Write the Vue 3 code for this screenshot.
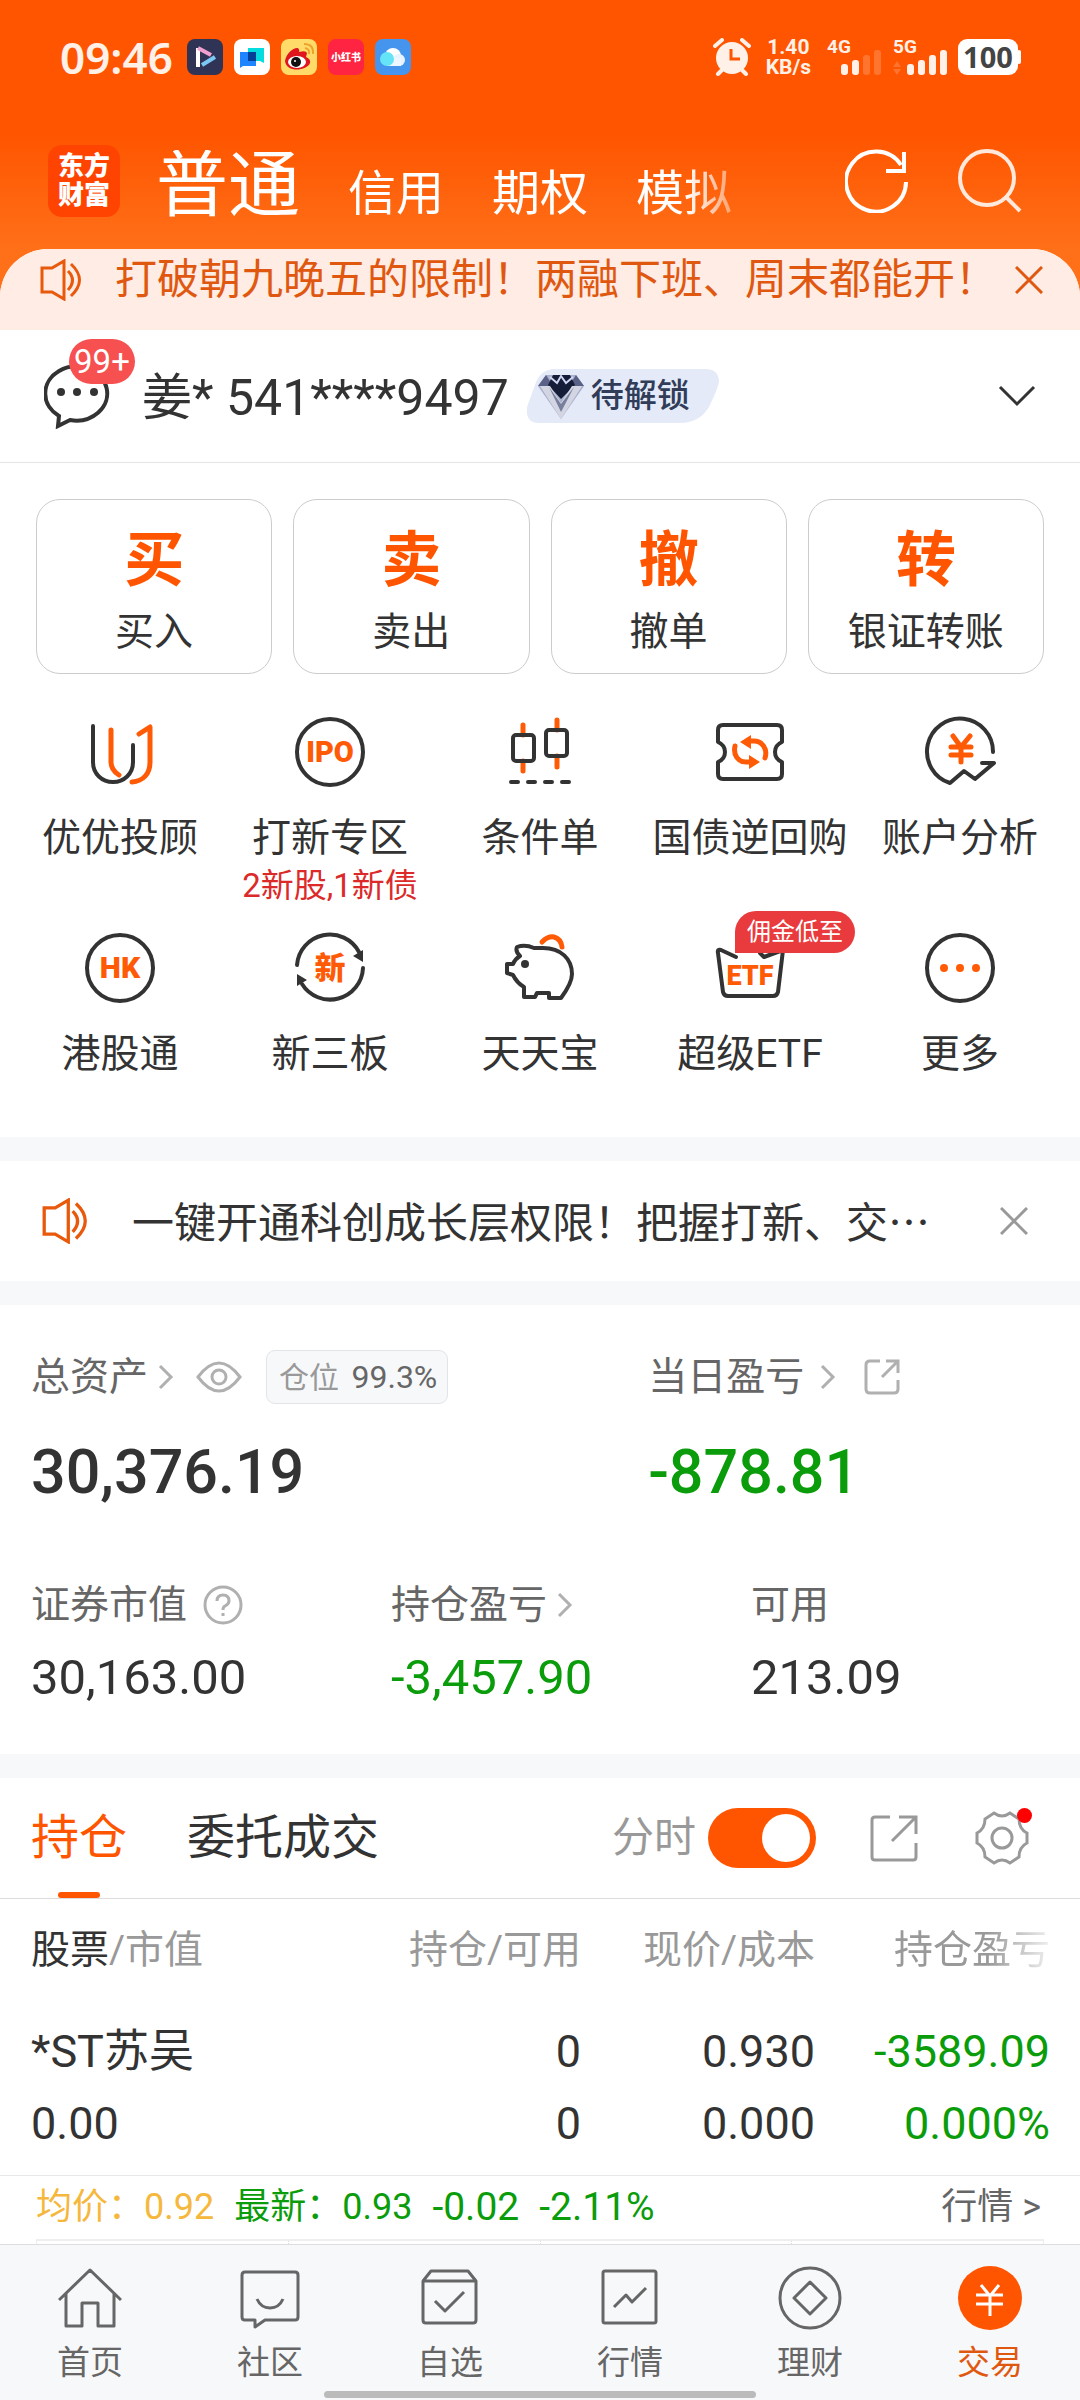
<script setup>
import { ref } from 'vue'

const accountTabs = ['普通', '信用', '期权', '模拟']

const mainActions = [
  { glyph: '买', label: '买入' },
  { glyph: '卖', label: '卖出' },
  { glyph: '撤', label: '撤单' },
  { glyph: '转', label: '银证转账' }
]

const D = 'fill="none" stroke="#333" stroke-width="4" stroke-linecap="round" stroke-linejoin="round"'
const O = 'fill="none" stroke="#ff5a05" stroke-width="5" stroke-linecap="round" stroke-linejoin="round"'
const T = 'fill="#ff5a05" text-anchor="middle" font-weight="900" font-family="Roboto, Noto Sans CJK SC, sans-serif"'

const services = [
  {
    label: '优优投顾',
    icon: `<path ${D} d="M8 9V45C8 57 17 65 28 65S48 57 48 45V28"/><path ${O} d="M26 13V45Q26 53 34 58M54 17L65 10V45C65 57 58 64 47 65"/>`
  },
  {
    label: '打新专区',
    note: '2新股,1新债',
    icon: `<circle ${D} cx="35" cy="35" r="33"/><text ${T} x="35" y="45" font-size="29">IPO</text>`
  },
  {
    label: '条件单',
    icon: `<path ${O} d="M18 8V18M18 44V54M52 3V13M52 39V50"/><rect ${D} x="8" y="18" width="21" height="26" rx="3"/><rect ${D} x="41" y="13" width="21" height="26" rx="3"/><path ${D} d="M6 65H13M23 65H30M40 65H47M57 65H64"/>`
  },
  {
    label: '国债逆回购',
    icon: `<path ${D} d="M8 8H62Q67 8 67 13V25Q60 28 60 35T67 45V57Q67 62 62 62H8Q3 62 3 57V45Q10 42 10 35T3 25V13Q3 8 8 8Z"/><path ${O} d="M20 29C18 38 23 45 31 45H36M50 41C53 32 47 24 39 24H34"/><path fill="#ff5a05" d="M25 25L36 18V32ZM45 45L34 38V52Z"/>`
  },
  {
    label: '账户分析',
    icon: `<path ${D} stroke-linejoin="miter" d="M68 35A33 33 0 1 0 25 66L39 54L50 62L69 46H57"/><path ${O} d="M28 19L36 30L45 19M36 30V45M26 30H46M26 38H46"/>`
  },
  {
    label: '港股通',
    icon: `<circle ${D} cx="35" cy="35" r="33"/><text ${T} x="35" y="45" font-size="30">HK</text>`
  },
  {
    label: '新三板',
    icon: `<path ${D} d="M2 32A33 33 0 0 1 64 19M68 35A33 33 0 0 1 7 51"/><path fill="#333" d="M68 17V29L58 23ZM2 41V53L12 47Z"/><text ${T} x="35" y="46" font-size="31">新</text>`
  },
  {
    label: '天天宝',
    icon: `<path ${D} d="M12 14Q20 11 29 15H38C56 15 67 26 67 41Q67 50 56 65H44V60H32L30 64H19V54Q12 50 8 42L2 40V31H8Q10 26 15 23Q10 18 12 14Z"/><path ${O} d="M37 9Q43 3 49 4Q56 6 57 14"/><circle cx="20" cy="31" r="4" fill="#333"/>`
  },
  {
    label: '超级ETF',
    tag: '佣金低至',
    icon: `<path ${D} d="M21 24L6 17Q2 16 3 20L8 59Q9 63 13 63H58Q62 63 63 59L68 17L49 24L45 20"/><text ${T} x="35" y="52" font-size="27">ETF</text>`
  },
  {
    label: '更多',
    icon: `<circle ${D} cx="35" cy="35" r="33"/><g fill="#ff5a05"><circle cx="19" cy="35" r="4"/><circle cx="35" cy="35" r="4"/><circle cx="51" cy="35" r="4"/></g>`
  }
]

const holdings = [
  { name: '*ST苏吴', value: '0.00', held: '0', available: '0', price: '0.930', cost: '0.000', profit: '-3589.09', rate: '0.000%' }
]

const navItems = [
  { label: '首页', icon: '<path d="M1 34L32 4L63 34M8 28V60H24V37H40V60H56V28"/>' },
  { label: '社区', icon: '<path d="M7 6H57Q60 6 60 9V51Q60 54 57 54H27L17 61V54H7Q4 54 4 51V9Q4 6 7 6Z"/><path d="M19 33Q23 42 32 42T45 33"/>' },
  { label: '自选', icon: '<path d="M5 15L13 5H50L58 15V54Q58 57 55 57H8Q5 57 5 54V15H58M17 35L27 45L46 26"/>' },
  { label: '行情', icon: '<rect x="5" y="5" width="53" height="52" rx="2"/><path d="M16 41L28 29L34 36L48 22"/>' },
  { label: '理财', icon: '<circle cx="32" cy="32" r="30"/><path d="M32 16L48 32L32 48L16 32Z"/>' },
  { label: '交易', active: true, icon: '<circle cx="32" cy="32" r="32" fill="#ff5500" stroke="none"/><path stroke="#fff" d="M23 19L32 30L41 19M18 29H45M18 38H45M32 29V50"/>' }
]

const minuteChart = ref(true)
</script>

<template>
  <div class="page">
    <header class="top">
      <div class="status">
        <span class="clock">09:46</span>
        <div class="apps">
          <svg viewBox="0 0 36 36"><rect width="36" height="36" rx="8" fill="#2f3355" /><path d="M11 9V28" stroke="#fff" stroke-width="4" /><path d="M11 9L24 16" stroke="#f0a0d0" stroke-width="4" /><path d="M15 26L28 18" stroke="#7cc8f4" stroke-width="4" /></svg>
          <svg viewBox="0 0 36 36"><rect width="36" height="36" rx="8" fill="#fff" /><path d="M14 9H30V24L26 22H14Z" fill="#04dce0" /><path d="M6 13H22V27H9L6 29Z" fill="#1f84ff" /><path d="M14 13H22V22H14Z" fill="#063f96" /></svg>
          <svg viewBox="0 0 36 36"><rect width="36" height="36" rx="8" fill="#ffdc6a" /><path d="M4 22C5 14 13 8 17 9Q19 11 18 13Q25 11 26 14L25 18Q30 20 29 24C26 32 5 34 4 22Z" fill="#e0161f" /><ellipse cx="16" cy="23" rx="9" ry="6" fill="#fff" /><circle cx="15" cy="23" r="5" fill="#111" /><circle cx="14" cy="22" r="1" fill="#fff" /><path d="M24 9Q29 10 28 15M23 5Q33 5 32 15" fill="none" stroke="#eea32d" stroke-width="2" /></svg>
          <svg viewBox="0 0 36 36"><rect width="36" height="36" rx="8" fill="#ff2442" /><text x="18" y="22" text-anchor="middle" font-size="10" font-weight="900" fill="#fff">小红书</text></svg>
          <svg viewBox="0 0 36 36"><rect width="36" height="36" rx="8" fill="#4595ee" /><circle cx="18" cy="17" r="8" fill="#fff" /><circle cx="24" cy="21" r="6" fill="#e8f3ff" /><rect x="12" y="19" width="14" height="8" fill="#eef6ff" /><circle cx="12" cy="20" r="7" fill="#64e4f6" /></svg>
        </div>
        <div class="signals">
          <svg class="alarm" viewBox="0 0 38 38"><circle cx="19" cy="20" r="16" fill="#fff0e8" /><path d="M2 8L9 2M36 8L29 2M5 36L9 32M33 36L29 32" stroke="#fff0e8" stroke-width="4" stroke-linecap="round" /><path d="M18 11V21H27" fill="none" stroke="#ff5500" stroke-width="3" /></svg>
          <div class="speed"><span>1.40</span><span>KB/s</span></div>
          <svg class="bars" viewBox="0 0 56 38"><text x="1" y="15" font-size="19" font-weight="700" fill="#fff0e8">4G</text><g fill="#fff0e8"><rect x="15" y="26" width="7" height="11" rx="3" /><rect x="26" y="22" width="7" height="15" rx="3" /><g opacity=".2"><rect x="37" y="17" width="7" height="20" rx="3" /><rect x="48" y="12" width="7" height="25" rx="3" /></g></g></svg>
          <svg class="bars" viewBox="0 0 56 38"><text x="1" y="15" font-size="19" font-weight="700" fill="#fff0e8">5G</text><path d="M1 29L5 23L9 29ZM1 31L5 37L9 31Z" fill="#fff0e8" opacity=".2" /><g fill="#fff0e8"><rect x="15" y="26" width="7" height="11" rx="3" /><rect x="26" y="22" width="7" height="15" rx="3" /><rect x="37" y="17" width="7" height="20" rx="3" /><rect x="48" y="12" width="7" height="25" rx="3" /></g></svg>
          <span class="battery">100</span>
        </div>
      </div>
      <div class="titlebar">
        <div class="logo"><span>东方</span><span>财富</span></div>
        <nav class="account-tabs">
          <button v-for="(tab, i) in accountTabs" :key="tab" type="button" :class="{ current: i === 0 }">{{ tab }}</button>
        </nav>
        <button type="button" class="tool" aria-label="刷新"><svg viewBox="0 0 64 64" fill="none" stroke="#fff" stroke-width="4"><path d="M61 33A30 30 0 1 1 56 16" /><path d="M59 3V22H41" /></svg></button>
        <button type="button" class="tool" aria-label="搜索"><svg viewBox="0 0 64 64" fill="none" stroke="#ffe9dc" stroke-width="4"><circle cx="29" cy="29" r="27" /><path d="M48 48L62 62" /></svg></button>
      </div>
    </header>

    <main class="sheet">
      <section class="promo">
        <svg class="speaker" viewBox="0 0 42 42"><path d="M2 9H12L24 2V40L12 33H2Z" /><path d="M28 12Q37 21 28 31M31 5Q48 21 31 37" /></svg>
        <p>打破朝九晚五的限制！两融下班、周末都能开！</p>
        <button type="button" class="close" aria-label="关闭"><svg viewBox="0 0 28 28"><path d="M1 1L27 27M27 1L1 27" /></svg></button>
      </section>

      <section class="account">
        <button type="button" class="chat" aria-label="消息">
          <svg viewBox="0 0 68 66"><path d="M15 53L14 63L26 57A31 27 0 1 0 15 53Z" fill="none" stroke="#333" stroke-width="4" /><g fill="#333"><circle cx="17" cy="29" r="4" /><circle cx="33" cy="29" r="4" /><circle cx="50" cy="29" r="4" /></g></svg>
          <span class="count">99+</span>
        </button>
        <span class="holder">姜* 541****9497</span>
        <a class="level" href="#level">
          <svg class="pill" viewBox="0 0 192 54" preserveAspectRatio="none"><path d="M28 0H178Q192 0 192 13Q191 19 183 36Q174 54 152 54H12Q-2 54 0 38L8 16Q13 0 28 0Z" fill="#e4eaf8" /></svg>
          <svg class="gem" viewBox="0 0 48 48"><path d="M9 3H39L47 14L24 47L1 14Z" fill="#aab0cc" /><path d="M9 3L16 14L1 14ZM39 3L32 14H47Z" fill="#596286" /><path d="M16 3H33L38 13L24 27L11 13Z" fill="#141c38" /><path d="M3 14H13L24 31L35 14H45L24 47Z" fill="#d3d6e2" /><path d="M12 15L24 40L37 15L24 32Z" fill="#777f9c" /><path d="M13 5L20 11L24 4L29 11L36 5" fill="none" stroke="#ced7f2" stroke-width="2" /></svg>
          <span>待解锁</span>
        </a>
        <button type="button" class="expand" aria-label="展开"><svg viewBox="0 0 38 22"><path d="M2 2L19 19L36 2" fill="none" stroke="#333" stroke-width="3" /></svg></button>
      </section>

      <section class="actions">
        <button v-for="a in mainActions" :key="a.label" type="button"><b>{{ a.glyph }}</b><span>{{ a.label }}</span></button>
      </section>

      <section class="services">
        <a v-for="s in services" :key="s.label" href="#service">
          <span class="icon"><svg viewBox="0 0 70 70" v-html="s.icon"></svg><em v-if="s.tag">{{ s.tag }}</em></span>
          <span class="name">{{ s.label }}</span>
          <small v-if="s.note">{{ s.note }}</small>
        </a>
      </section>

      <section class="notice">
        <svg class="speaker" viewBox="0 0 42 42"><path d="M2 9H12L24 2V40L12 33H2Z" /><path d="M28 12Q37 21 28 31M31 5Q48 21 31 37" /></svg>
        <p>一键开通科创成长层权限！把握打新、交…</p>
        <button type="button" class="close" aria-label="关闭"><svg viewBox="0 0 28 28"><path d="M1 1L27 27M27 1L1 27" /></svg></button>
      </section>

      <section class="assets">
        <div class="totals">
          <div>
            <div class="caption">
              <span>总资产</span>
              <svg class="more" viewBox="0 0 16 26"><path d="M2 2L13 13L2 24" /></svg>
              <svg class="eye" viewBox="0 0 46 32"><path d="M2 16Q23 -12 44 16Q23 44 2 16Z" /><circle cx="23" cy="16" r="7" /></svg>
              <span class="ratio">仓位 <b>99.3%</b></span>
            </div>
            <strong>30,376.19</strong>
          </div>
          <div>
            <div class="caption">
              <span>当日盈亏</span>
              <svg class="more wide" viewBox="0 0 16 26"><path d="M2 2L13 13L2 24" /></svg>
              <svg class="share" viewBox="0 0 36 36"><path d="M16 2H6Q2 2 2 6V30Q2 34 6 34H30Q34 34 34 30V21M22 2H34V14M33 3L18 18" /></svg>
            </div>
            <strong class="down">-878.81</strong>
          </div>
        </div>
        <div class="details">
          <div>
            <div class="caption"><span>证券市值</span><svg class="help" viewBox="0 0 40 40"><circle cx="20" cy="20" r="18" /><path d="M14 16Q14 10 20 10T26 16Q26 19 22 21Q20 22 20 25M20 28V31" /></svg></div>
            <span class="figure">30,163.00</span>
          </div>
          <div>
            <div class="caption"><span>持仓盈亏</span><svg class="more" viewBox="0 0 16 26"><path d="M2 2L13 13L2 24" /></svg></div>
            <span class="figure down">-3,457.90</span>
          </div>
          <div>
            <div class="caption"><span>可用</span></div>
            <span class="figure">213.09</span>
          </div>
        </div>
      </section>

      <section class="positions">
        <div class="switcher">
          <button type="button" class="tab selected">持仓</button>
          <button type="button" class="tab">委托成交</button>
          <label class="minute"><span>分时</span><input v-model="minuteChart" type="checkbox"></label>
          <button type="button" class="act" aria-label="分享"><svg viewBox="0 0 54 54"><path d="M23 6H8Q5 6 5 9V46Q5 49 8 49H46Q49 49 49 46V32M32 6H49V23M48 7L25 30" /></svg></button>
          <button type="button" class="act" aria-label="设置"><svg viewBox="0 0 54 54"><path d="M52 22V32Q44 36 44 46L35 52Q27 46 19 52L10 46Q10 36 2 32V22Q10 18 10 8L19 2Q27 8 35 2L44 8Q44 18 52 22Z" /><circle cx="27" cy="27" r="10" /></svg><i></i></button>
        </div>
        <table>
          <colgroup><col><col class="c2"><col class="c3"><col class="c4"></colgroup>
          <thead>
            <tr><th><b>股票</b>/市值</th><th>持仓/可用</th><th>现价/成本</th><th><span class="fade">持仓盈亏</span></th></tr>
          </thead>
          <tbody>
            <tr v-for="h in holdings" :key="h.name">
              <td><div>{{ h.name }}</div><div>{{ h.value }}</div></td>
              <td><div>{{ h.held }}</div><div>{{ h.available }}</div></td>
              <td><div>{{ h.price }}</div><div>{{ h.cost }}</div></td>
              <td class="down"><div>{{ h.profit }}</div><div>{{ h.rate }}</div></td>
            </tr>
          </tbody>
        </table>
        <div class="quote">
          <span class="avg">均价：0.92</span>
          <span class="down">最新：0.93</span>
          <span class="down delta">-0.02</span>
          <span class="down delta">-2.11%</span>
          <a href="#quote">行情 &gt;</a>
        </div>
        <div class="chart"><span></span><span></span><span></span><span></span></div>
      </section>
    </main>

    <nav class="bottom">
      <a v-for="n in navItems" :key="n.label" href="#nav" :class="{ active: n.active }">
        <svg viewBox="0 0 64 64" v-html="n.icon"></svg>
        <span>{{ n.label }}</span>
      </a>
      <div class="indicator"></div>
    </nav>
  </div>
</template>

<style>
body {
  background: #fff;
}
</style>

<style scoped>
.page {
  display: flex;
  flex-direction: column;
  min-height: 100vh;
  font-family: Roboto, "Noto Sans CJK SC", sans-serif;
  line-height: 1.25;
  color: #333;
  overflow: hidden;
}
.page * {
  box-sizing: border-box;
}
button {
  border: 0;
  padding: 0;
  background: none;
  font: inherit;
  color: inherit;
}
a {
  color: inherit;
  text-decoration: none;
}
p {
  margin: 0;
}
svg {
  display: block;
  flex: none;
}

.top {
  padding: 38px 58px 80px 48px;
  background: linear-gradient(#ff5500 0, #ff5500 135px, #ff7019 250px);
}
.status {
  display: flex;
  align-items: center;
  height: 38px;
  padding-left: 12px;
}
.clock {
  font: 600 44px/38px "Noto Sans", sans-serif;
  color: #fff0e8;
}
.apps {
  display: flex;
  gap: 11px;
  margin-left: 14px;
}
.apps svg {
  width: 36px;
  height: 36px;
}
.signals {
  display: flex;
  align-items: center;
  margin-left: auto;
  margin-right: 4px;
  gap: 10px;
}
.alarm {
  width: 38px;
  height: 38px;
}
.speed {
  display: flex;
  flex-direction: column;
  margin: 0 5px;
  font-size: 21px;
  font-weight: 700;
  line-height: 20px;
  color: #fff0e8;
  text-align: center;
}
.bars {
  width: 56px;
  height: 38px;
  overflow: visible;
}
.battery {
  position: relative;
  width: 60px;
  height: 36px;
  border-radius: 9px;
  background: #fff;
  color: #444;
  font: 700 29px/36px "Noto Sans", sans-serif;
  text-align: center;
}
.battery::after {
  content: "";
  position: absolute;
  right: -3px;
  top: 11px;
  width: 4px;
  height: 14px;
  border-radius: 2px;
  background: #fff;
}
.titlebar {
  display: flex;
  align-items: center;
  height: 72px;
  margin-top: 69px;
}
.logo {
  display: flex;
  flex-direction: column;
  justify-content: center;
  width: 72px;
  height: 72px;
  border-radius: 14px;
  background: #ff4300;
  color: #fff;
  font-size: 26px;
  font-weight: 900;
  line-height: 29px;
  text-align: center;
}
.account-tabs {
  display: flex;
  align-items: baseline;
  gap: 48px;
  margin: 18px auto 0 36px;
  color: #fff;
  font-size: 48px;
  line-height: 72px;
  mask-image: linear-gradient(to right, #000 92%, rgba(0, 0, 0, .4));
}
.account-tabs .current {
  font-size: 72px;
}
.tool svg {
  width: 64px;
  height: 64px;
}
.tool + .tool {
  margin-left: 49px;
}

.sheet {
  display: flex;
  flex: 1;
  flex-direction: column;
  margin-top: -48px;
  border-radius: 48px 48px 0 0;
  background: #fff;
  overflow: hidden;
}
.promo,
.notice {
  display: flex;
  align-items: center;
  font-size: 42px;
  line-height: 60px;
}
.promo {
  height: 81px;
  padding: 0 37px 19px 40px;
  background: #ffece4;
  color: #e05810;
}
.promo p {
  margin: 0 auto 0 33px;
  white-space: nowrap;
}
.speaker {
  width: 42px;
  height: 42px;
  fill: none;
  stroke: #e8590c;
  stroke-width: 3;
}
.close svg {
  width: 28px;
  height: 28px;
  fill: none;
  stroke: currentColor;
  stroke-width: 3;
}
.account {
  display: flex;
  align-items: center;
  height: 133px;
  padding: 0 44px;
  border-bottom: 1px solid #e5e5e5;
}
.chat {
  position: relative;
}
.chat svg {
  width: 68px;
  height: 66px;
}
.count {
  position: absolute;
  left: 25px;
  top: -24px;
  width: 66px;
  height: 45px;
  border-radius: 23px;
  background: #f75050;
  color: #fff;
  font-size: 33px;
  line-height: 46px;
}
.holder {
  margin-left: 30px;
  padding-top: 4px;
  font-size: 50px;
  line-height: 60px;
  white-space: nowrap;
}
.level {
  position: relative;
  display: flex;
  align-items: center;
  width: 192px;
  height: 54px;
  margin-left: 18px;
  padding-left: 10px;
  color: #303c58;
  font-size: 33px;
  font-weight: 500;
}
.pill {
  position: absolute;
  inset: 0;
  width: 100%;
  height: 100%;
}
.gem {
  position: relative;
  width: 48px;
  height: 48px;
}
.level span {
  position: relative;
  margin-left: 6px;
}
.expand {
  margin-left: auto;
}
.expand svg {
  width: 38px;
  height: 22px;
}

.actions {
  display: grid;
  grid-template-columns: repeat(4, 1fr);
  gap: 21px;
  padding: 36px 36px 43px;
}
.actions button {
  display: flex;
  flex-direction: column;
  align-items: center;
  gap: 8px;
  padding: 25px 0 14px;
  border: 1px solid #ccc;
  border-radius: 24px;
}
.actions b {
  color: #ff5500;
  font-size: 60px;
  line-height: 72px;
}
.actions span {
  font-size: 39px;
  line-height: 54px;
}
.services {
  display: grid;
  grid-template-columns: repeat(5, 1fr);
  row-gap: 29px;
  padding: 0 15px 59px;
}
.services a {
  display: flex;
  flex-direction: column;
  align-items: center;
}
.icon {
  position: relative;
}
.icon svg {
  width: 70px;
  height: 70px;
  overflow: visible;
}
.icon em {
  position: absolute;
  left: 20px;
  top: -22px;
  width: 120px;
  height: 42px;
  border-radius: 21px 21px 21px 0;
  background: #e93b3d;
  color: #fff;
  font-size: 24px;
  font-style: normal;
  line-height: 43px;
  text-align: center;
}
.name {
  margin-top: 27px;
  font-size: 39px;
  line-height: 48px;
  white-space: nowrap;
}
.services small {
  margin-top: 6px;
  color: #dc2a2a;
  font-size: 33px;
  line-height: 36px;
  white-space: nowrap;
}

.notice {
  height: 168px;
  padding: 0 52px 0 42px;
  border: solid #f7f8fa;
  border-width: 24px 0;
}
.notice p {
  margin: 0 auto 0 44px;
  padding-bottom: 2px;
  font-family: "Noto Sans CJK SC", sans-serif;
  white-space: nowrap;
}
.notice .speaker {
  width: 46px;
  height: 46px;
}
.notice .close {
  color: #999;
}

.assets {
  padding: 45px 0 46px;
  border-bottom: 24px solid #f7f8fa;
}
.totals {
  display: grid;
  grid-template-columns: 4fr 3fr;
}
.totals > div,
.details > div {
  padding-left: 31px;
}
.details {
  display: grid;
  grid-template-columns: repeat(3, 1fr);
  margin-top: 70px;
}
.caption {
  display: flex;
  align-items: center;
  height: 54px;
  color: #666;
  font-size: 39px;
}
.caption svg {
  fill: none;
  stroke: #b0b0b0;
  stroke-width: 3;
}
.more {
  width: 16px;
  height: 26px;
  margin-left: 10px;
}
.more.wide {
  margin-left: 16px;
}
.eye {
  width: 46px;
  height: 32px;
  margin-left: 22px;
}
.share {
  width: 36px;
  height: 36px;
  margin-left: 28px;
}
.help {
  width: 40px;
  height: 40px;
  margin-left: 16px;
}
.ratio {
  height: 54px;
  margin-left: 24px;
  padding: 0 10px 0 12px;
  border: 1px solid #e2e4e8;
  border-radius: 9px;
  background: #f7f8fa;
  color: #999;
  font-size: 30px;
  line-height: 52px;
}
.ratio b {
  margin-left: 5px;
  color: #666;
  font-size: 32px;
  font-weight: 400;
}
.totals strong {
  display: block;
  margin-top: 32px;
  font-size: 61px;
  font-weight: 500;
  line-height: 72px;
}
.figure {
  display: block;
  margin-top: 16px;
  font-size: 49px;
  line-height: 60px;
}
.down,
.totals .down {
  color: #0a9c0a;
}

.positions {
  display: flex;
  flex: 1;
  flex-direction: column;
}
.switcher {
  display: flex;
  align-items: center;
  height: 121px;
  padding: 0 51px 0 31px;
  border-bottom: 1px solid #ddd;
}
.tab {
  position: relative;
  height: 120px;
  margin-right: 60px;
  font-size: 48px;
}
.tab.selected {
  color: #ff5500;
}
.tab.selected::after {
  content: "";
  position: absolute;
  left: 50%;
  bottom: 0;
  width: 42px;
  height: 6px;
  margin-left: -21px;
  border-radius: 3px;
  background: #ff5500;
}
.minute {
  display: flex;
  align-items: center;
  gap: 12px;
  margin-left: auto;
  color: #999;
  font-size: 42px;
}
.minute input {
  appearance: none;
  width: 108px;
  height: 60px;
  margin: 0;
  padding: 6px;
  border-radius: 30px;
  background: #ccc;
}
.minute input::before {
  content: "";
  display: block;
  width: 48px;
  height: 48px;
  border-radius: 50%;
  background: #fff;
}
.minute input:checked {
  background: #ff5500;
}
.minute input:checked::before {
  margin-left: 48px;
}
.act {
  position: relative;
  margin-left: 51px;
}
.act + .act {
  margin-left: 54px;
}
.act svg {
  width: 54px;
  height: 54px;
  fill: none;
  stroke: #999;
  stroke-width: 3;
}
.act i {
  position: absolute;
  right: -3px;
  top: -3px;
  width: 15px;
  height: 15px;
  border-radius: 50%;
  background: #f00;
}
table {
  width: 100%;
  table-layout: fixed;
  border-collapse: collapse;
}
.c2 {
  width: 210px;
}
.c3 {
  width: 234px;
}
.c4 {
  width: 265px;
}
th,
td {
  padding: 0;
  text-align: right;
  white-space: nowrap;
}
th:first-child,
td:first-child {
  padding-left: 31px;
  text-align: left;
}
th:last-child,
td:last-child {
  padding-right: 30px;
}
th {
  height: 102px;
  color: #999;
  font-size: 39px;
  font-weight: 400;
}
th b {
  color: #333;
  font-weight: 400;
}
.fade {
  mask-image: linear-gradient(to right, #000 60%, rgba(0, 0, 0, .15));
}
td {
  padding-top: 15px;
  padding-bottom: 15px;
  font-size: 45px;
  line-height: 72px;
}
.quote {
  display: flex;
  align-items: center;
  height: 64px;
  padding: 0 39px 0 36px;
  border-top: 1px solid #e8e8e8;
  font-size: 36px;
}
.quote span {
  margin-right: 20px;
}
.quote .delta {
  font-size: 39px;
}
.avg {
  color: #f5b83d;
}
.quote a {
  margin-left: auto;
  color: #666;
}
.chart {
  display: flex;
  flex: 1;
  min-height: 5px;
  margin: 0 36px;
  border: solid #eee;
  border-width: 2px 1px 0;
}
.chart span {
  flex: 1;
}
.chart span + span {
  border-left: 1px dotted #ddd;
}

.bottom {
  position: relative;
  display: grid;
  grid-template-columns: repeat(6, 1fr);
  height: 157px;
  border-top: 1px solid #ddd;
  background: #f7f8fa;
  color: #666;
  font-size: 33px;
}
.bottom a {
  display: flex;
  flex-direction: column;
  align-items: center;
  padding-top: 21px;
}
.bottom svg {
  width: 64px;
  height: 64px;
  fill: none;
  stroke: #666;
  stroke-width: 3;
  stroke-linejoin: round;
}
.bottom span {
  margin-top: 12px;
  line-height: 42px;
}
.bottom .active {
  color: #e05810;
}
.indicator {
  position: absolute;
  left: 30%;
  right: 30%;
  bottom: 3px;
  height: 7px;
  border-radius: 4px;
  background: #bbb;
}
</style>
